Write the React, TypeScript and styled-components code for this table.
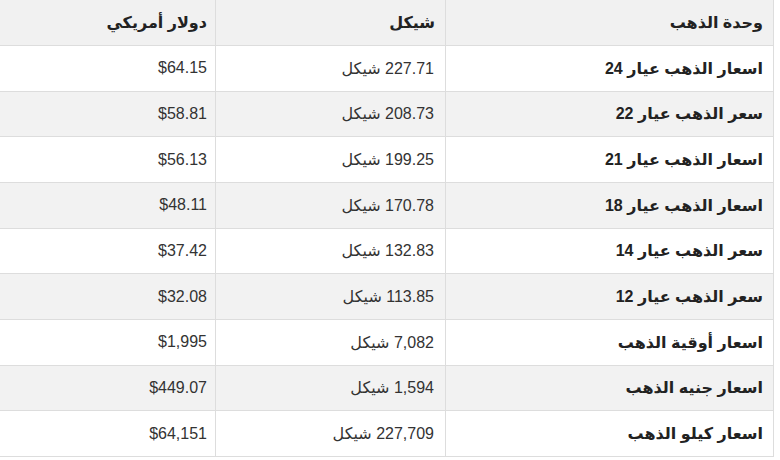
import React from "react";
import styled, { createGlobalStyle } from "styled-components";

const Global = createGlobalStyle`
  html, body { margin: 0; padding: 0; background: #fff; }
  body { font-family: "Liberation Sans", "DejaVu Sans", Arial, sans-serif; }
`;

const Frame = styled.div`
  width: 774px;
  overflow: hidden;
  direction: rtl;
`;

const Table = styled.table`
  width: 776px;
  table-layout: fixed;
  margin-top: -1px;
  border-collapse: collapse;
  direction: rtl;
  font-size: 16px;
  color: #333;
`;

const Col = styled.col<{ $w: number }>`
  width: ${(p) => p.$w}px;
`;

const Row = styled.tr<{ $shade?: boolean }>`
  background: ${(p) => (p.$shade ? "#f2f2f2" : "#ffffff")};
  height: 45.67px;
`;

const HeadRow = styled.tr`
  background: #f1f1f1;
  height: 46px;
`;

const Th = styled.th<{ $pad: number }>`
  border: 1px solid #dddddd;
  padding: 0 ${(p) => p.$pad}px 0 8px;
  text-align: right;
  font-weight: bold;
  color: #222;
  vertical-align: middle;
`;

const Td = styled.td<{ $bold?: boolean; $pad: number }>`
  border: 1px solid #dddddd;
  padding: 0 ${(p) => p.$pad}px 0 8px;
  text-align: right;
  vertical-align: middle;
  font-weight: ${(p) => (p.$bold ? "bold" : "normal")};
  color: ${(p) => (p.$bold ? "#222" : "#333")};
  white-space: nowrap;
`;

const rows = [
  ["اسعار الذهب عيار 24", "227.71 شيكل", "$64.15"],
  ["سعر الذهب عيار 22", "208.73 شيكل", "$58.81"],
  ["اسعار الذهب عيار 21", "199.25 شيكل", "$56.13"],
  ["اسعار الذهب عيار 18", "170.78 شيكل", "$48.11"],
  ["سعر الذهب عيار 14", "132.83 شيكل", "$37.42"],
  ["سعر الذهب عيار 12", "113.85 شيكل", "$32.08"],
  ["اسعار أوقية الذهب", "7,082 شيكل", "$1,995"],
  ["اسعار جنيه الذهب", "1,594 شيكل", "$449.07"],
  ["اسعار كيلو الذهب", "227,709 شيكل", "$64,151"],
];

export default function App() {
  return (
    <>
      <Global />
      <Frame>
        <Table>
          <colgroup>
            <Col $w={328} />
            <Col $w={230} />
            <Col $w={218} />
          </colgroup>
          <thead>
            <HeadRow>
              <Th $pad={10}>وحدة الذهب</Th>
              <Th $pad={10}>شيكل</Th>
              <Th $pad={8}>دولار أمريكي</Th>
            </HeadRow>
          </thead>
          <tbody>
            {rows.map((r, i) => (
              <Row key={i} $shade={i % 2 === 1}>
                <Td $bold $pad={10}>{r[0]}</Td>
                <Td $pad={11}>{r[1]}</Td>
                <Td $pad={8} dir="ltr" style={{ textAlign: "right" }}>{r[2]}</Td>
              </Row>
            ))}
          </tbody>
        </Table>
      </Frame>
    </>
  );
}
